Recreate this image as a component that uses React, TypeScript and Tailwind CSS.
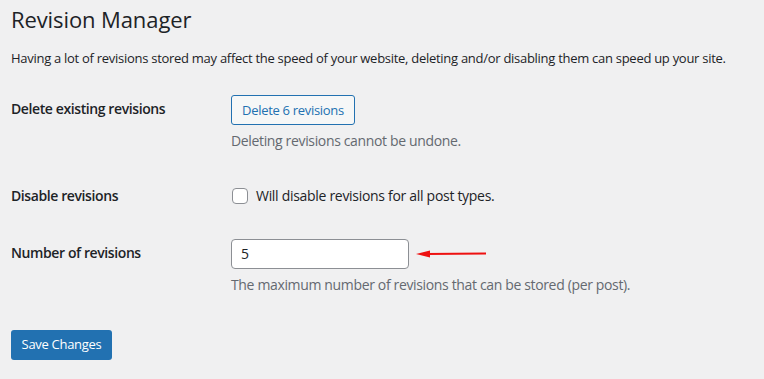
export default function App() {
  return (
    <div className="min-h-[379px] w-[764px] bg-[#f0f0f1] text-[#1d2327] text-[13px] leading-[1.4]" style={{ fontFamily: '"Open Sans", "Noto Sans", sans-serif' }}>
      <div className="pl-[11px] pt-[3px]">
        <h1 className="text-[22px] font-normal leading-[1.3] m-0 pt-[2px] tracking-[-0.1px]">Revision Manager</h1>
        <p className="mt-[15px] mb-0 tracking-[-0.28px]">Having a lot of revisions stored may affect the speed of your website, deleting and/or disabling them can speed up your site.</p>
        <div className="mt-[28px] flex text-[14px]">
          <div className="w-[220px] font-semibold pt-[4px] tracking-[-0.4px]">Delete existing revisions</div>
          <div className="flex flex-col">
            <button className="h-[30px] w-[124px] rounded-[3px] border border-[#2271b1] bg-[#f6f7f7] text-[#2271b1] text-[13px] tracking-[-0.3px]">Delete 6 revisions</button>
            <div className="mt-[6px] text-[#646970] tracking-[-0.35px]">Deleting revisions cannot be undone.</div>
          </div>
        </div>
        <div className="mt-[36px] flex items-center text-[14px]">
          <div className="w-[220px] font-semibold tracking-[-0.4px]">Disable revisions</div>
          <div className="flex items-center">
            <span className="ml-[1px] w-[16px] h-[16px] rounded-[4px] border border-[#8c8f94] bg-white"></span>
            <span className="ml-[8px] tracking-[-0.3px]">Will disable revisions for all post types.</span>
          </div>
        </div>
        <div className="mt-[33px] flex text-[14px]">
          <div className="w-[220px] font-semibold pt-[4px] tracking-[-0.4px]">Number of revisions</div>
          <div className="flex flex-col">
            <div className="flex items-center">
              <div className="h-[30px] w-[178px] rounded-[4px] border border-[#8c8f94] bg-white flex items-center pl-[9px] text-[14px]">5</div>
              <svg width="72" height="8" viewBox="0 0 72 8" className="ml-[7px]">
                <line x1="10" y1="4" x2="70" y2="3.5" stroke="#ee1111" strokeWidth="2.2" />
                <polygon points="0,4 14,0.5 14,7.5" fill="#ee1111" />
              </svg>
            </div>
            <div className="mt-[6px] text-[#646970] tracking-[-0.35px]">The maximum number of revisions that can be stored (per post).</div>
          </div>
        </div>
        <button className="mt-[35px] h-[30px] w-[101px] rounded-[3px] bg-[#2271b1] text-white text-[13px] tracking-[-0.3px]">Save Changes</button>
      </div>
    </div>
  );
}
